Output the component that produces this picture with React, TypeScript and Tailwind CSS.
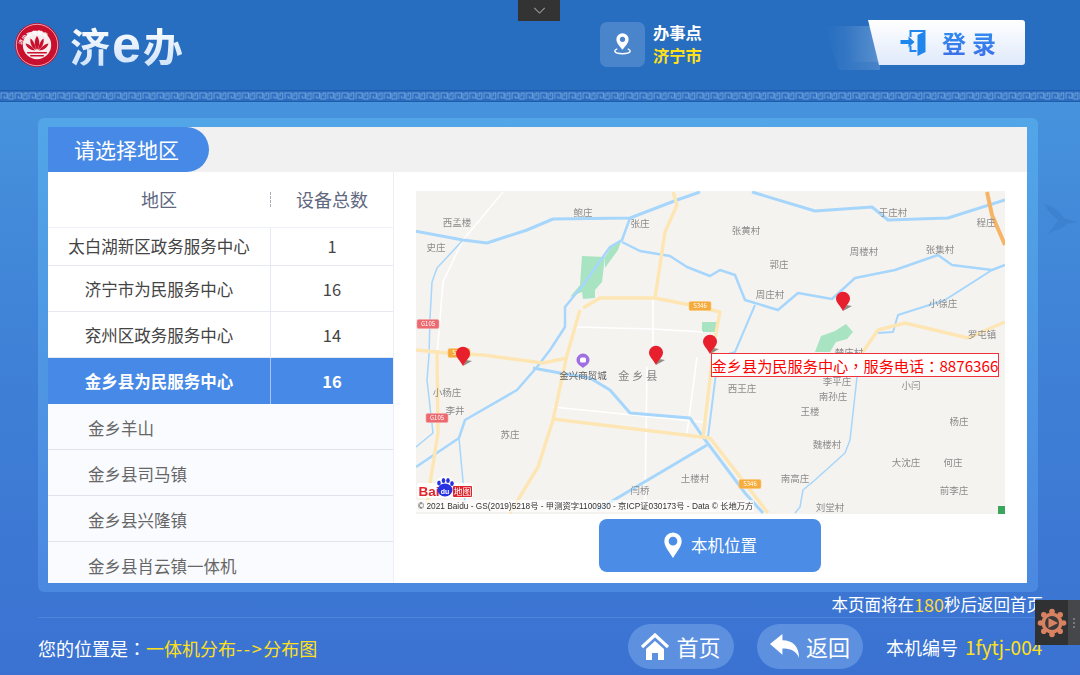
import type { ReactNode } from "react";

const RIVERS: [string, number][] = [
  ["M415 231 L463 240 L487 243 L527 230 L553 219 L630 218 L677 200 L700 192", 3],
  ["M463 240 L437 268 L432 282 L430 318 L429 355 L427 380 L433 433 L416 447", 1.5],
  ["M630 218 L622 240 L610 247 L583 285 L565 307 L565 327 L550 350 L537 367 L517 390 L465 420 L459 438 L416 467", 2.5],
  ["M459 438 L465 503", 1.5],
  ["M622 242 L640 251 L670 256 L687 267 L710 276 L720 270 L735 275 L745 300 L778 310 L798 293 L832 299 L855 278 L895 270 L938 255 L952 265 L992 270 L1005 265", 2.5],
  ["M752 192 L815 211 L872 207 L888 220 L948 218 L1005 200", 3],
  ["M992 270 L945 300 L898 315 L893 332 L878 333", 2],
  ["M755 305 L735 352 L718 357 L708 437", 2],
  ["M533 368 L560 373 L590 378 L610 390 L630 413 L690 418 L703 437 L745 493 L763 513", 3],
  ["M707 445 L597 510", 3],
  ["M857 377 L850 440 L845 453 L815 480 L803 490 L800 507 L795 513", 1.5],
];

const ROADS: string[] = [
  "M673 192 L677 205 L665 232 L655 298",
  "M583 308 L600 298 L655 298 L690 305 L720 312 L715 338 L703 437",
  "M580 310 L567 355 L553 420 L538 467 L510 513",
  "M553 419 L627 428 L710 438 L768 513",
  "M416 350 L447 353 L483 355 L543 363 L567 358",
  "M437 350 L438 433 L427 503",
  "M862 353 L878 330 L905 323 L968 338 L1005 322",
];

const MINOR_ROADS: string[] = [
  "M503 192 L463 240 L443 282 L437 355",
  "M575 327 L653 329 L703 332",
  "M653 298 L653 355",
  "M647 367 L645 503",
  "M553 407 L703 422",
  "M697 357 L687 433",
];

const MAP_LABELS: [string, number, number][] = [
  ["西孟楼", 457, 222], ["鲍庄", 583, 212], ["张庄", 640, 223], ["史庄", 436, 247],
  ["张黄村", 746, 230], ["郭庄", 779, 264], ["周庄村", 770, 294], ["周楼村", 864, 251],
  ["于庄村", 893, 212], ["程庄", 986, 222], ["张集村", 940, 249], ["小徐庄", 943, 303],
  ["罗屯镇", 982, 334], ["小杨庄", 447, 392], ["李井", 455, 410], ["苏庄", 510, 434],
  ["土楼村", 695, 478], ["闫桥", 640, 490], ["西王庄", 742, 388], ["李平庄", 837, 381],
  ["南孙庄", 833, 396], ["王楼", 810, 411], ["魏楼村", 827, 444], ["南高庄", 795, 478],
  ["刘堂村", 830, 507], ["小闫", 911, 385], ["杨庄", 959, 421], ["大沈庄", 906, 462],
  ["何庄", 953, 462], ["前李庄", 954, 490], ["楚庄村", 849, 352],
];

const PINS: [number, number][] = [
  [463, 366],
  [656, 365],
  [710, 354],
  [843, 311],
];

const ROWS = [
  { name: "太白湖新区政务服务中心", count: "1", h: "h-[38px]", nudge: "pb-[1px]" },
  { name: "济宁市为民服务中心", count: "16", h: "h-[46px]", nudge: "pt-[2px]" },
  { name: "兖州区政务服务中心", count: "14", h: "h-[46px]", nudge: "pt-[2px]" },
];

const SUB_ROWS = ["金乡羊山", "金乡县司马镇", "金乡县兴隆镇", "金乡县肖云镇一体机"];

function Shield({ x, y, label, red }: { x: number; y: number; label: string; red?: boolean }) {
  return (
    <g>
      <rect
        x={x - 11}
        y={y - 4.5}
        width="22"
        height="9"
        rx="1.5"
        fill={red ? "#ea6a70" : "#f6ac3c"}
        stroke={red ? "#f5a3a6" : "#fbc87a"}
        strokeWidth="0.6"
      />
      <text x={x} y={y + 2.2} textAnchor="middle" fontSize="6" fill="#fff">
        {label}
      </text>
    </g>
  );
}

function Pin({ x, y }: { x: number; y: number }) {
  return (
    <g>
      <path d={`M${x} ${y} L${x + 9} ${y - 5} L${x + 3} ${y - 6} Z`} fill="#77736c" opacity="0.8" />
      <path
        d={`M${x} ${y} C${x - 3} ${y - 6} ${x - 7} ${y - 8} ${x - 7} ${y - 12.5} A7 6.8 0 0 1 ${x + 7} ${y - 12.5} C${x + 7} ${y - 8} ${x + 3} ${y - 6} ${x} ${y} Z`}
        fill="#e8202e"
      />
    </g>
  );
}

function MapDrawing() {
  return (
    <svg viewBox="416 191 589 323" className="block w-full h-full blur-[0.3px]" aria-hidden>
      <rect x="416" y="191" width="589" height="323" fill="#f5f3f0" />
      <path d="M582 256 L605 257 L602 282 L595 290 L595 298 L583 299 L582 292 L570 297 L580 285 Z" fill="#a9e4c2" />
      <path d="M605 257 L612 246 L622 239 L618 250 L605 268 Z" fill="#a9e4c2" />
      <path d="M702 322 L717 322 L717 332 L702 332 Z" fill="#a9e4c2" />
      <path d="M815 352 L821 336 L835 331 L846 324 L853 332 L847 339 L836 342 L830 352 Z" fill="#a9e4c2" />
      {MINOR_ROADS.map((d) => (
        <path key={d} d={d} fill="none" stroke="#fff" strokeWidth="1.6" />
      ))}
      {RIVERS.map(([d, w]) => (
        <path key={d} d={d} fill="none" stroke="#a6d6fb" strokeWidth={w} strokeLinejoin="round" />
      ))}
      {ROADS.map((d) => (
        <path key={d} d={d} fill="none" stroke="#fde6b4" strokeWidth="3.4" strokeLinejoin="round" />
      ))}
      <path d="M987 192 L992 215 L1005 245" fill="none" stroke="#f6b566" strokeWidth="4" />
      {MAP_LABELS.map(([t, x, y]) => (
        <text key={t} x={x} y={y + 3.5} textAnchor="middle" fontSize="9.5" fill="#8b8b8b">
          {t}
        </text>
      ))}
      <text x="639" y="380" textAnchor="middle" fontSize="11.5" letterSpacing="2.5" fill="#858585">
        金乡县
      </text>
      <text x="583" y="379" textAnchor="middle" fontSize="9.5" fill="#5f5f5f">
        金兴商贸城
      </text>
      <path d="M583 368 C581 366 576.5 364.5 576.5 360 A6.5 6.5 0 0 1 589.5 360 C589.5 364.5 585 366 583 368 Z" fill="#a06fe2" />
      <rect x="580" y="357.5" width="6" height="5" rx="1.5" fill="#fff" />
      <Shield x={428} y={324} label="G105" red />
      <Shield x={437} y={418} label="G105" red />
      <Shield x={700} y={306} label="S346" />
      <Shield x={750} y={484} label="S346" />
      <Shield x={459} y={353} label="S346" />
      <rect x="998" y="506" width="7" height="8" fill="#3aa55c" />
      {PINS.map(([x, y]) => (
        <Pin key={x} x={x} y={y} />
      ))}
      <rect x="416" y="500" width="338" height="12" fill="#fff" opacity="0.65" />
      <text x="418" y="509" fontSize="8.3" fill="#333" fontFamily="'Liberation Sans','Noto Sans CJK SC',sans-serif">
        © 2021 Baidu - GS(2019)5218号 - 甲测资字1100930 - 京ICP证030173号 - Data © 长地万方
      </text>
      <rect x="417" y="483" width="56" height="15" rx="2" fill="#fff" opacity="0.85" />
      <circle cx="445" cy="486" r="10" fill="#fff" opacity="0.85" />
      <text x="418.5" y="496" fontSize="13.5" fontWeight="700" fill="#e1232c" fontFamily="'Liberation Sans',sans-serif">
        Bai
      </text>
      <g fill="#2932e1">
        <ellipse cx="445" cy="490" rx="7.5" ry="6.5" />
        <ellipse cx="439" cy="483" rx="1.8" ry="2.5" />
        <ellipse cx="443.5" cy="480.5" rx="1.8" ry="2.6" />
        <ellipse cx="448" cy="480.5" rx="1.8" ry="2.6" />
        <ellipse cx="452" cy="483.5" rx="1.8" ry="2.5" />
      </g>
      <text x="445" y="494" textAnchor="middle" fontSize="7" fontWeight="700" fill="#fff" fontFamily="'Liberation Sans',sans-serif">
        du
      </text>
      <rect x="453" y="486" width="19" height="11" rx="1" fill="#e1232c" />
      <text x="462.5" y="495" textAnchor="middle" fontSize="9" fill="#fff">
        地图
      </text>
    </svg>
  );
}

function Logo() {
  return (
    <svg viewBox="0 0 44 44" className="w-[44px] h-[44px] shrink-0" aria-hidden>
      <defs>
        <path id="seal-arc" d="M6 24 A16.5 16.5 0 0 1 38 24" />
      </defs>
      <circle cx="22" cy="22" r="22" fill="#c8102e" />
      <circle cx="22" cy="22" r="20.7" fill="none" stroke="#f6dfe0" strokeWidth="0.7" />
      <circle cx="22" cy="22" r="14.2" fill="#f9ecec" />
      <text fontSize="5" fontWeight="700" fill="#fff">
        <textPath href="#seal-arc" startOffset="2">
          济宁政务服务
        </textPath>
      </text>
      <g fill="#c8102e">
        <path d="M22 13 C25 17 25 22 22 27 C19 22 19 17 22 13 Z" />
        <path d="M15.5 15.5 C19 18 20.5 23 21 27 C17 25 14.5 20 15.5 15.5 Z" />
        <path d="M28.5 15.5 C25 18 23.5 23 23 27 C27 25 29.5 20 28.5 15.5 Z" />
        <path d="M10.5 20.5 C14 21 18 24 20 27.5 C15.5 27.5 11.5 24.5 10.5 20.5 Z" />
        <path d="M33.5 20.5 C30 21 26 24 24 27.5 C28.5 27.5 32.5 24.5 33.5 20.5 Z" />
        <rect x="12" y="29" width="20" height="1.6" rx="0.8" />
        <rect x="15" y="32" width="14" height="1.4" rx="0.7" />
      </g>
    </svg>
  );
}

function Meander() {
  return (
    <svg className="block w-full h-[12px] shrink-0" aria-hidden>
      <defs>
        <pattern id="meander" width="14.2" height="12" patternUnits="userSpaceOnUse">
          <rect width="14.2" height="12" fill="#2c6cc0" />
          <rect y="0" width="14.2" height="1" fill="#1f5cab" />
          <rect y="11" width="14.2" height="1" fill="#1f5cab" />
          <path d="M1 9 V3 H7 V8 H4 V5.5 M8.5 3 V9 H13 V3 H10.5 V6.5" fill="none" stroke="#6ea3dc" strokeWidth="1" />
        </pattern>
      </defs>
      <rect width="100%" height="12" fill="url(#meander)" />
    </svg>
  );
}

function FooterButton({ icon, label }: { icon: ReactNode; label: string }) {
  return (
    <div className="w-[106px] h-[45px] rounded-full bg-[#5d91e0] flex items-center justify-center gap-[7px] text-white text-[22px]">
      {icon}
      <span>{label}</span>
    </div>
  );
}

function RegionTable() {
  return (
    <div className="w-[346px] shrink-0 border-r border-[#eceff5] flex flex-col min-h-0">
      <div className="h-[56px] flex items-center text-[18px] text-[#5f6880] border-b border-[#eef1f8] shrink-0">
        <div className="w-[222px] text-center">地区</div>
        <div className="h-[15px] border-l border-dashed border-[#a8adb8]" />
        <div className="flex-1 text-center">设备总数</div>
      </div>
      <div className="flex-1 overflow-hidden text-[16.5px] text-[#444]">
        {ROWS.map((r) => (
          <div key={r.name} className={`${r.h} flex border-b border-[#e6e9f1]`}>
            <div className={`${r.nudge} w-[223px] flex items-center justify-center border-r border-[#e6e9f1]`}>{r.name}</div>
            <div className={`${r.nudge} flex-1 flex items-center justify-center`}>{r.count}</div>
          </div>
        ))}
        <div className="h-[46px] flex bg-[#4689e6] text-white font-bold">
          <div className="w-[223px] pt-[1px] flex items-center justify-center border-r border-[#a5c6f2]">金乡县为民服务中心</div>
          <div className="flex-1 pt-[1px] flex items-center justify-center">16</div>
        </div>
        {SUB_ROWS.map((name) => (
          <div key={name} className="h-[46px] pt-[3px] flex items-center pl-[40px] bg-[#f9fbff] border-b border-[#e1e4ec] text-[#666]">
            {name}
          </div>
        ))}
      </div>
    </div>
  );
}

export default function App() {
  return (
    <div className="relative w-[1080px] h-[675px] overflow-hidden flex flex-col bg-gradient-to-b from-[#4a9ae0] via-[#3f82d6] to-[#3b72d2] font-['Noto_Sans_CJK_SC',sans-serif]">
      {/* top bar */}
      <header className="h-[90px] shrink-0 bg-[#276ec0] flex items-start relative">
        <div className="ml-[15px] mt-[23px] flex items-center">
          <Logo />
          <div className="ml-[11px] flex items-center h-[44px] font-bold text-[40px] leading-none text-transparent bg-clip-text bg-gradient-to-b from-white to-[#cfe2fa]">
            <span>济</span>
            <span className="font-['Liberation_Sans',sans-serif] text-[52px] -mt-[3px] mx-[2px]">e</span>
            <span>办</span>
          </div>
        </div>
        <div className="absolute left-[600px] top-[21px] flex items-center">
          <div className="w-[45px] h-[45px] rounded-[7px] bg-[#4a85cc] flex items-center justify-center">
            <svg viewBox="0 0 24 28" className="w-[21px] h-[25px]" aria-hidden>
              <path d="M12 20 C8 15 5 12 5 8 A7 7 0 0 1 19 8 C19 12 16 15 12 20 Z M12 5 A3 3 0 1 0 12 11 A3 3 0 1 0 12 5 Z" fill="#fff" fillRule="evenodd" />
              <path d="M6 19 C2 20.5 1 24 12 24.5 C23 24 22 20.5 18 19" fill="none" stroke="#fff" strokeWidth="1.6" />
            </svg>
          </div>
          <div className="ml-[8px] text-[16.3px] leading-[23px] font-bold">
            <div className="text-white">办事点</div>
            <div className="text-[#ffe01a]">济宁市</div>
          </div>
        </div>
      </header>

      <Meander />

      {/* main panel */}
      <main className="mt-[16px] ml-[38px] w-[1000px] h-[474px] shrink-0 rounded-[6px] bg-gradient-to-b from-[#52a6e8] to-[#4b88e0] pt-[9px] pl-[10px] pr-[11px] pb-[9px]">
        <div className="w-full h-full bg-white flex flex-col">
          <div className="h-[45px] shrink-0 bg-[#f1f1f1]">
            <div className="w-[161px] h-full bg-[#4689e6] rounded-r-full text-white text-[21px] flex items-center pl-[26px]">
              请选择地区
            </div>
          </div>
          <div className="flex-1 flex min-h-0">
            <RegionTable />
            <div className="flex-1 pl-[22px] pt-[19px]">
              <div className="relative w-[589px] h-[323px]">
                <MapDrawing />
                <div className="absolute left-[295px] top-[162px] w-[288px] h-[24px] bg-white border border-[#f0313c] text-[#f00] text-[15.2px] flex items-center justify-center whitespace-nowrap">
                  金乡县为民服务中心<span className="font-['Noto_Sans_CJK_TC',sans-serif]">，</span>服务电话<span className="font-['Noto_Sans_CJK_TC',sans-serif]">：</span>8876366
                </div>
              </div>
              <div className="ml-[183px] mt-[5px] w-[222px] h-[53px] rounded-[8px] bg-[#4a8ce6] flex items-center justify-center gap-[8px] text-white text-[16.5px]">
                <svg viewBox="0 0 20 28" className="w-[20px] h-[27px]" aria-hidden>
                  <path d="M10 27 C6 20 1 15 1 9.5 A9 9 0 0 1 19 9.5 C19 15 14 20 10 27 Z M10 5 A4.5 4.5 0 1 0 10 14 A4.5 4.5 0 1 0 10 5 Z" fill="#fff" fillRule="evenodd" />
                </svg>
                本机位置
              </div>
            </div>
          </div>
        </div>
      </main>

      {/* footer */}
      <div className="h-[25px] shrink-0 flex items-center justify-end pr-[37px] text-[16.5px] text-white whitespace-nowrap">
        本页面将在<span className="text-[#ffd83a] text-[18px]">180</span>秒后返回首页
      </div>
      <div className="ml-[38px] h-px shrink-0 bg-[#4c86dc]" />
      <footer className="flex-1 pl-[38px] flex items-center text-[18px] text-white whitespace-nowrap">
        <div className="w-[590px] pt-[3px]">
          您的位置是<span className="font-['Noto_Sans_CJK_TC',sans-serif]">：</span>
          <span className="text-[#ffe01a]">
            一体机分布<span className="tracking-[1.6px]">--&gt;</span>分布图
          </span>
        </div>
        <FooterButton
          label="首页"
          icon={
            <svg viewBox="0 0 28 28" className="w-[28px] h-[28px]" aria-hidden>
              <path d="M1 14 L14 2 L27 14" fill="none" stroke="#fff" strokeWidth="3.2" />
              <path d="M5 16 L14 8 L23 16 V27 H17 V20 H11 V27 H5 Z" fill="#fff" />
            </svg>
          }
        />
        <div className="w-[23px]" />
        <FooterButton
          label="返回"
          icon={
            <svg viewBox="0 0 28 24" className="w-[29px] h-[25px]" aria-hidden>
              <path d="M0 9.5 L12 0 V6 C22 6 28 12 28 23 C25 16 20 14 12 14 V20 Z" fill="#fff" />
            </svg>
          }
        />
        <div className="ml-[23px] pt-[2px]">本机编号</div>
        <div className="ml-[7px] pt-[2px] text-[#ffe01a] text-[19px]">1fytj-004</div>
      </footer>

      {/* bits lying over the page */}
      <div className="absolute left-[518px] top-0 w-[42px] h-[21px] bg-[#333] flex items-center justify-center">
        <svg viewBox="0 0 14 8" className="w-[13px] h-[7px]" aria-hidden>
          <path d="M1 1 L7 7 L13 1" fill="none" stroke="#9a9a9a" strokeWidth="1.2" />
        </svg>
      </div>

      <div className="absolute left-[800px] top-[20px] w-[225px] h-[52px]">
        <div className="absolute left-[25px] top-[6px] w-[55px] h-[44px] bg-gradient-to-r from-white/0 to-white/15 [clip-path:polygon(0_0,100%_0,100%_100%,24%_100%)]" />
        <div className="absolute left-[44px] top-[6px] w-[36px] h-[36px] bg-gradient-to-r from-white/0 to-white/10 [clip-path:polygon(0_0,100%_0,100%_100%,24%_100%)]" />
        <div className="absolute left-[68px] top-0 w-[157px] h-[45px] rounded-r-[3px] bg-gradient-to-b from-white to-[#dfe9fb] [clip-path:polygon(0_0,100%_0,100%_100%,7%_100%)] flex items-center pl-[32px]">
          <svg viewBox="0 0 26 28" className="w-[27px] h-[28px]" aria-hidden>
            <path d="M9 1 H25 V23 L17 27 V6 L23 3 H11 V8 H9 Z M9 17 H11 V21 H16 V23 H9 Z" fill="#1f86ee" />
            <path d="M0 11 H8 V7.5 L14 13 L8 18.5 V15 H0 Z" fill="#1f86ee" />
          </svg>
          <div className="ml-[15px] text-[24px] font-bold tracking-[6px] text-transparent bg-clip-text bg-gradient-to-b from-[#2b93f0] to-[#3d6be8]">
            登录
          </div>
        </div>
      </div>

      <svg viewBox="0 0 40 40" className="absolute left-[1040px] top-[198px] w-[40px] h-[40px] opacity-10" aria-hidden>
        <path d="M4 6 C14 8 20 14 24 20 L38 24 L27 26 C22 32 14 32 8 36 C12 30 16 26 18 22 C12 18 7 12 4 6 Z" fill="#123f85" />
      </svg>

      <div className="absolute left-[1035px] top-[600px] w-[45px] h-[45px] bg-[#2f3133] flex">
        <div className="w-[33px] flex items-center justify-center">
          <svg viewBox="0 0 30 30" className="w-[30px] h-[30px]" aria-hidden>
            <g fill="#d98261">
              <circle cx="15" cy="15" r="10.5" />
              <circle cx="15" cy="3.5" r="2.8" />
              <circle cx="15" cy="26.5" r="2.8" />
              <circle cx="3.5" cy="15" r="2.8" />
              <circle cx="26.5" cy="15" r="2.8" />
              <circle cx="6.8" cy="6.8" r="2.8" />
              <circle cx="23.2" cy="6.8" r="2.8" />
              <circle cx="6.8" cy="23.2" r="2.8" />
              <circle cx="23.2" cy="23.2" r="2.8" />
            </g>
            <circle cx="15" cy="15" r="7" fill="#3a3a3c" />
            <path d="M11.5 10 L21 15 L11.5 20 Z" fill="#d98261" />
          </svg>
        </div>
        <div className="flex-1 bg-[#45474a] flex flex-col items-center justify-center gap-[2px]">
          <div className="w-[2px] h-[2px] bg-[#77797c]" />
          <div className="w-[2px] h-[2px] bg-[#77797c]" />
          <div className="w-[2px] h-[2px] bg-[#77797c]" />
        </div>
      </div>
    </div>
  );
}
